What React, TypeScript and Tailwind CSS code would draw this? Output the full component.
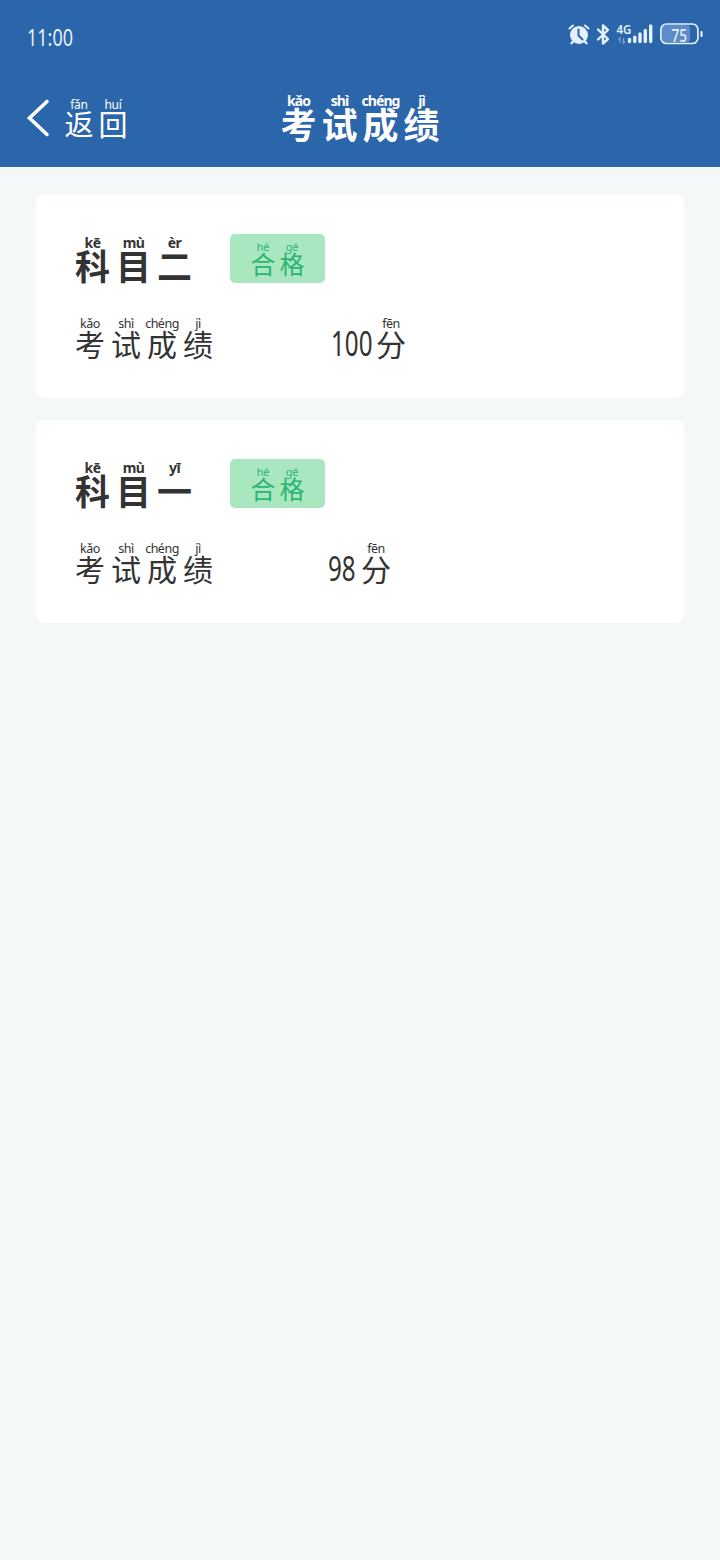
type Syllable = [pinyin: string, hanzi: string];

interface PhoneticProps {
  text: Syllable[];
  cell: string;
  pinyin: string;
  hanzi: string;
}

const SCORE_LABEL: Syllable[] = [
  ['kǎo', '考'],
  ['shì', '试'],
  ['chéng', '成'],
  ['jì', '绩'],
];

const PASSED: Syllable[] = [
  ['hé', '合'],
  ['gé', '格'],
];

const RESULTS: { subject: Syllable[]; score: string; offset: string; digits: string }[] = [
  {
    subject: [['kē', '科'], ['mù', '目'], ['èr', '二']],
    score: '100',
    offset: 'ml-[115px]',
    digits: 'w-[44px]',
  },
  {
    subject: [['kē', '科'], ['mù', '目'], ['yī', '一']],
    score: '98',
    offset: 'ml-[112px]',
    digits: 'w-[32px]',
  },
];

function Phonetic({ text, cell, pinyin, hanzi }: PhoneticProps) {
  return (
    <span className="flex">
      {text.map(([sound, character]) => (
        <span key={character} className={`flex shrink-0 flex-col items-center whitespace-nowrap ${cell}`}>
          <span className={`font-['Noto_Sans',sans-serif] ${pinyin}`}>{sound}</span>
          <span className={`font-['KaiTi','Noto_Sans_CJK_SC',sans-serif] ${hanzi}`}>{character}</span>
        </span>
      ))}
    </span>
  );
}

function StatusIcons() {
  return (
    <svg width="140" height="28" viewBox="0 0 140 28" fill="none" className="mt-[20px] text-[#e4f0fc]">
      <g stroke="currentColor" strokeLinecap="round">
        <circle cx="15" cy="15" r="9" fill="currentColor" stroke="none" />
        <path d="M5.500 8.500 9 5.500M24.500 8.500 21 5.500" strokeWidth="2" />
        <path d="m9.500 21-2 2.300M20.500 21l2 2.300" strokeWidth="2.400" />
        <path d="M14.500 9.500v6l4 4" stroke="#2b65aa" strokeWidth="2" />
        <path d="m34 9.500 10 9.500-5 4.500v-18l5 4.500-10 9.500" strokeWidth="2.400" strokeLinejoin="round" />
      </g>
      <text x="52.500" y="13.500" fontSize="13" fontWeight="600" fontFamily="Noto Sans" textLength="15" lengthAdjust="spacingAndGlyphs" fill="currentColor">4G</text>
      <path d="M56 23v-5l-1.500 1.500M59.500 18v5l1.500-1.500" stroke="#7fa6d6" strokeWidth="1.200" />
      <path d="M65.500 19.500v2M70.800 17.300v4.200M76 14v7.500M81.300 10.500v11M86.700 6v15.500" stroke="currentColor" strokeWidth="3.400" strokeLinecap="round" />
      <rect x="98" y="5" width="28" height="17.500" rx="4" fill="#5d8cc8" />
      <rect x="96.900" y="4" width="37" height="19.500" rx="5.500" stroke="currentColor" strokeWidth="1.700" />
      <path d="M137.500 12v4" stroke="currentColor" strokeWidth="2.200" strokeLinecap="round" />
      <text x="107.500" y="21.500" fontSize="17.500" fontWeight="500" fontFamily="Noto Sans" textLength="15.500" lengthAdjust="spacingAndGlyphs" fill="currentColor">75</text>
    </svg>
  );
}

export default function App() {
  return (
    <main className="min-h-[1560px] w-[720px] bg-[#f4f8f9] text-[#333333]">
      <header className="h-[167px] bg-[#2b65aa] text-white">
        <div className="flex h-[76px] justify-between pl-[27px] pr-[16px]">
          <span className="mt-[21px] w-[60px] origin-left scale-x-[0.75] font-['Noto_Sans',sans-serif] text-[24px] leading-[32px] text-[#e4f0fc]">11:00</span>
          <StatusIcons />
        </div>
        <div className="grid h-[91px] grid-cols-[1fr_164px_1fr]">
          <div className="flex items-start pl-[26px] pt-[20px]">
            <svg width="24" height="44" viewBox="0 0 24 44" fill="none">
              <path d="M21 5.500 3.500 22 21 38.500" stroke="currentColor" strokeWidth="3.600" strokeLinecap="round" />
            </svg>
            <div className="ml-[12px]">
              <Phonetic
                text={[['fǎn', '返'], ['huí', '回']]}
                cell="w-[34px]"
                pinyin="text-[12px] leading-[17px] tracking-[-0.3px]"
                hanzi="text-[29px] leading-[20px]"
              />
            </div>
          </div>
          <h1 className="pt-[16px]">
            <Phonetic
              text={SCORE_LABEL}
              cell="w-[41px]"
              pinyin="text-[14px] leading-[18px] font-bold tracking-[-0.900px]"
              hanzi="text-[36px] leading-[27px] font-bold"
            />
          </h1>
        </div>
      </header>
      <section className="flex flex-col gap-[22px] px-9 pt-[27.500px]">
        {RESULTS.map(({ subject, score, offset, digits }) => (
          <article key={score} className="h-[203px] rounded-lg bg-white pl-[36px] pt-[39px]">
            <div className="flex h-[81px] items-start">
              <h2>
                <Phonetic
                  text={subject}
                  cell="w-[41px]"
                  pinyin="text-[14px] leading-[18px] font-bold tracking-[-0.500px]"
                  hanzi="text-[35px] leading-[25px] font-bold"
                />
              </h2>
              <div className="ml-[35px] flex h-[49px] w-[95px] justify-center rounded-[5px] bg-[#a9e7c1] pt-[6px] text-[#2cb572]">
                <Phonetic
                  text={PASSED}
                  cell="w-[29px]"
                  pinyin="text-[11px] leading-[14px] tracking-[-0.300px]"
                  hanzi="text-[25px] leading-[19px]"
                />
              </div>
            </div>
            <div className="flex items-start">
              <Phonetic
                text={SCORE_LABEL}
                cell="w-[36px]"
                pinyin="text-[12.500px] leading-[17px] tracking-[-0.500px]"
                hanzi="text-[30px] leading-[23px]"
              />
              <div className={`flex items-start ${offset}`}>
                <span className={`mt-[8px] ${digits}`}>
                  <span className="inline-block origin-left scale-x-[0.69] font-['Noto_Sans',sans-serif] text-[35px] leading-[40px]">{score}</span>
                </span>
                <Phonetic
                  text={[['fēn', '分']]}
                  cell="w-[32px]"
                  pinyin="text-[12.500px] leading-[17px] tracking-[-0.500px]"
                  hanzi="text-[30px] leading-[23px]"
                />
              </div>
            </div>
          </article>
        ))}
      </section>
    </main>
  );
}
